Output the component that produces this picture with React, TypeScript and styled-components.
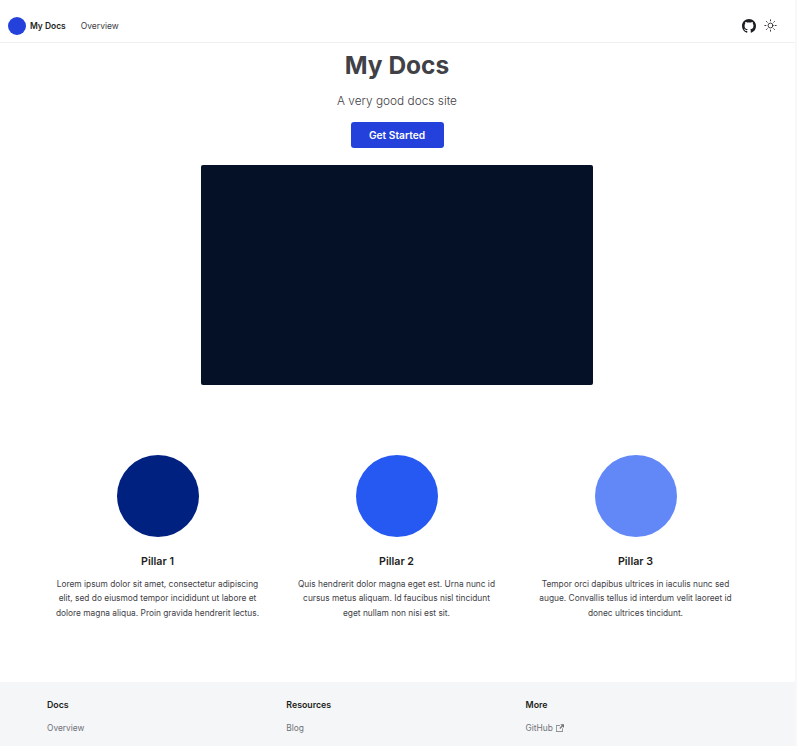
import styled, { createGlobalStyle } from 'styled-components'

const GlobalStyle = createGlobalStyle`
html, body {
    margin: 0;
    padding: 0;
    background: #ffffff;
}
* {
    box-sizing: border-box;
}
body {
    font-family: Inter, 'Liberation Sans', sans-serif;
    color: #1c1e21;
    -webkit-font-smoothing: antialiased;
}
`;

const Page = styled.div`
    width: 797px;
    height: 746px;
    overflow: hidden;
    display: flex;
    flex-direction: column;
    border-right: 2px solid #f8f8f8;
`;

const Navbar = styled.nav`
    height: 43px;
    flex-shrink: 0;
    padding: 9px 18px 0 8px;
    display: flex;
    align-items: center;
    justify-content: space-between;
    border-bottom: 1px solid #f0f0f1;
`;

const NavGroup = styled.div`
    display: flex;
    align-items: center;
`;

const Logo = styled.span`
    width: 18px;
    height: 18px;
    border-radius: 50%;
    background: #2541dc;
    margin-right: 4px;
`;

const Brand = styled.a`
    font-size: 8.45px;
    font-weight: 600;
    color: #1c1e21;
    margin-right: 15px;
`;

const NavLink = styled.a`
    font-size: 8.5px;
    color: #3a3d42;
`;

const IconLink = styled.a`
    display: flex;
    margin-left: 8px;
    color: #1c1e21;
`;

const Hero = styled.header`
    display: flex;
    flex-direction: column;
    align-items: center;
    padding-right: 1px;
`;

const Title = styled.h1`
    margin: 5px 0 0;
    font-size: 24.5px;
    line-height: 34px;
    font-weight: 700;
    color: #3f4146;
`;

const Tagline = styled.p`
    margin: 9px 0 0;
    font-size: 11.85px;
    line-height: 20px;
    font-weight: 300;
    color: #3f4146;
`;

const CtaButton = styled.a`
    margin-top: 11px;
    width: 93px;
    height: 26px;
    border-radius: 3px;
    background: #2541dc;
    color: #ffffff;
    font-size: 10.2px;
    font-weight: 600;
    display: flex;
    align-items: center;
    justify-content: center;
`;

const Screen = styled.div`
    margin-top: 17px;
    width: 392px;
    height: 220px;
    border-radius: 2px;
    background: #051127;
`;

const Pillars = styled.section`
    margin-top: 70px;
    padding: 0 38px;
    display: grid;
    grid-template-columns: repeat(3, 239px);
`;

const Pillar = styled.article`
    padding: 0 17px;
    display: flex;
    flex-direction: column;
    align-items: center;
    text-align: center;
`;

const Circle = styled.div<{ $color: string }>`
    width: 82px;
    height: 82px;
    border-radius: 50%;
    background: ${(p) => p.$color};
`;

const PillarTitle = styled.h3`
    margin: 18px 0 0;
    font-size: 10.7px;
    line-height: 14px;
    font-weight: 600;
    color: #1c1e21;
`;

const PillarText = styled.p`
    margin: 8px 0 0;
    font-size: 8.35px;
    line-height: 14.4px;
    color: #3f4146;
`;

const Footer = styled.footer`
    margin-top: auto;
    height: 64px;
    flex-shrink: 0;
    padding: 17px 40px 0 47px;
    background: #f5f6f7;
    display: grid;
    grid-template-columns: repeat(3, 239.3px);
`;

const FooterTitle = styled.div`
    font-size: 8.8px;
    line-height: 12px;
    font-weight: 600;
    color: #1c1e21;
`;

const FooterLink = styled.a`
    margin-top: 11px;
    font-size: 8.4px;
    line-height: 12px;
    color: #6f7277;
    display: flex;
    align-items: center;
    gap: 3px;
`;

const FooterCol = styled.div`
    display: flex;
    flex-direction: column;
    align-items: flex-start;
`;

const pillars = [
    {
        title: 'Pillar 1',
        color: '#012181',
        text: 'Lorem ipsum dolor sit amet, consectetur adipiscing elit, sed do eiusmod tempor incididunt ut labore et dolore magna aliqua. Proin gravida hendrerit lectus.',
    },
    {
        title: 'Pillar 2',
        color: '#2659f2',
        text: 'Quis hendrerit dolor magna eget est. Urna nunc id cursus metus aliquam. Id faucibus nisl tincidunt eget nullam non nisi est sit.',
    },
    {
        title: 'Pillar 3',
        color: '#6288f8',
        text: 'Tempor orci dapibus ultrices in iaculis nunc sed augue. Convallis tellus id interdum velit laoreet id donec ultrices tincidunt.',
    },
];

const footerCols = [
    { title: 'Docs', link: 'Overview' },
    { title: 'Resources', link: 'Blog' },
    { title: 'More', link: 'GitHub', external: true },
];

const App = () => {
    return (
        <>
            <GlobalStyle />
            <Page>
                <Navbar>
                    <NavGroup>
                        <Logo />
                        <Brand>My Docs</Brand>
                        <NavLink>Overview</NavLink>
                    </NavGroup>
                    <NavGroup>
                        <IconLink>
                            <svg width="14" height="14" viewBox="0 0 16 16" fill="currentColor">
                                <path d="M8 0C3.58 0 0 3.58 0 8c0 3.54 2.29 6.53 5.47 7.59.4.07.55-.17.55-.38 0-.19-.01-.82-.01-1.49-2.01.37-2.53-.49-2.69-.94-.09-.23-.48-.94-.82-1.13-.28-.15-.68-.52-.01-.53.63-.01 1.08.58 1.23.82.72 1.21 1.87.87 2.33.66.07-.52.28-.87.51-1.07-1.78-.2-3.64-.89-3.64-3.95 0-.87.31-1.59.82-2.15-.08-.2-.36-1.02.08-2.12 0 0 .67-.21 2.2.82.64-.18 1.32-.27 2-.27s1.36.09 2 .27c1.53-1.04 2.2-.82 2.2-.82.44 1.1.16 1.92.08 2.12.51.56.82 1.27.82 2.15 0 3.07-1.87 3.75-3.65 3.95.29.25.54.73.54 1.48 0 1.07-.01 1.93-.01 2.2 0 .21.15.46.55.38A8.01 8.01 0 0 0 16 8c0-4.42-3.58-8-8-8z" />
                            </svg>
                        </IconLink>
                        <IconLink>
                            <svg width="13" height="13" viewBox="0 0 24 24" fill="none" stroke="currentColor" strokeWidth="1.6" strokeLinecap="round">
                                <circle cx="12" cy="12" r="4.5" />
                                <path d="M12 1.5v2M12 20.5v2M1.5 12h2M20.5 12h2M4.6 4.6l1.4 1.4M18 18l1.4 1.4M4.6 19.4L6 18M18 6l1.4-1.4" />
                            </svg>
                        </IconLink>
                    </NavGroup>
                </Navbar>

                <Hero>
                    <Title>My Docs</Title>
                    <Tagline>A very good docs site</Tagline>
                    <CtaButton>Get Started</CtaButton>
                    <Screen />
                </Hero>

                <Pillars>
                    {pillars.map((pillar) => (
                        <Pillar key={pillar.title}>
                            <Circle $color={pillar.color} />
                            <PillarTitle>{pillar.title}</PillarTitle>
                            <PillarText>{pillar.text}</PillarText>
                        </Pillar>
                    ))}
                </Pillars>

                <Footer>
                    {footerCols.map((col) => (
                        <FooterCol key={col.title}>
                            <FooterTitle>{col.title}</FooterTitle>
                            <FooterLink>
                                {col.link}
                                {col.external && (
                                    <svg width="8" height="8" viewBox="0 0 24 24" fill="currentColor">
                                        <path d="M21 13v10h-21v-19h12v2h-10v15h17v-8h2zm3-12h-10.988l4.035 4-6.977 7.07 2.828 2.828 6.977-7.07 4.125 4.172v-11z" />
                                    </svg>
                                )}
                            </FooterLink>
                        </FooterCol>
                    ))}
                </Footer>
            </Page>
        </>
    )
}

export default App
